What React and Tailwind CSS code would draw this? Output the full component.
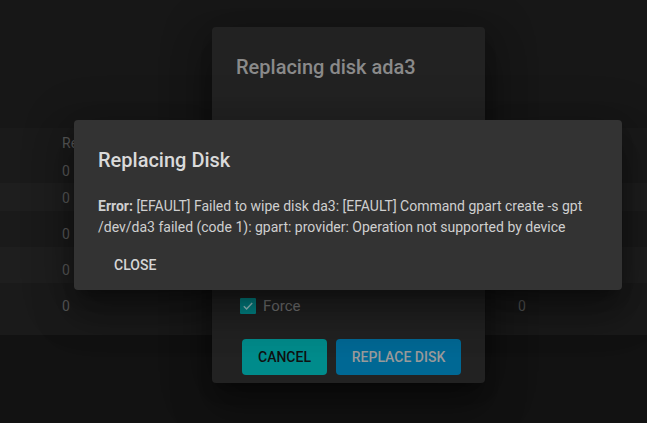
import React from "react";

const shadow =
  "shadow-[0_11px_15px_-7px_rgba(0,0,0,0.35),0_24px_38px_3px_rgba(0,0,0,0.25),0_9px_46px_8px_rgba(0,0,0,0.22)]";

function Row({ h, pt, light, right, children }) {
  return (
    <div
      className={`flex items-start ${h} ${pt} ${light ? "bg-[#1e1e1e]" : "bg-[#1a1a1a]"}`}
    >
      <div className="w-[62px]" />
      <div className="w-[456px] text-[14px] leading-[20px] text-[#5a5a5a]">{children}</div>
      <div className="text-[14px] leading-[20px] text-[#5a5a5a]">{right}</div>
    </div>
  );
}

export default function App() {
  return (
    <div
      className="relative w-[647px] h-[423px] overflow-hidden bg-[#171717]"
      style={{ fontFamily: "Roboto, 'Liberation Sans', sans-serif" }}
    >
      <div className="flex flex-col h-full">
        <div className="h-[128px]" />
        <div className="flex flex-col">
          <Row h="h-[28px]" pt="pt-[5px]">Re</Row>
          <Row h="h-[27px]" pt="pt-[5px]">0</Row>
          <Row h="h-[28px]" pt="pt-[5px]" light>0</Row>
          <Row h="h-[36px]" pt="pt-[13px]">0</Row>
          <Row h="h-[36px]" pt="pt-[13px]" light>0</Row>
          <Row h="h-[52px]" pt="pt-[13px]" right="0">0</Row>
        </div>
        <div className="flex-1 bg-[#121212]" />
      </div>

      {/* Replace disk dialog */}
      <div
        className={`absolute left-[212px] top-[27px] w-[273px] h-[356px] rounded-[4px] bg-[#222222] ${shadow} flex flex-col`}
      >
        <div className="px-[24px] pt-[24px] text-[20px] leading-[32px] font-medium text-[#8a8a8a]">
          Replacing disk ada3
        </div>
        <div className="flex-1" />
        <div className="flex items-center gap-[7px] pl-[28px] h-[20px]">
          <div className="w-[16px] h-[16px] bg-[#00898b] flex items-center justify-center rounded-[1px]">
            <svg width="12" height="12" viewBox="0 0 12 12">
              <path
                d="M1.8 6.2 L4.6 9 L10.2 3"
                fill="none"
                stroke="#9fd0d0"
                strokeWidth="1.5"
              />
            </svg>
          </div>
          <span className="text-[15px] text-[#777777]">Force</span>
        </div>
        <div className="h-[23px]" />
        <div className="flex gap-[9px] pl-[30px]">
          <button className="w-[85px] h-[36px] rounded-[4px] bg-[#008b8b] text-[14px] font-medium text-[#101010] uppercase">
            Cancel
          </button>
          <button className="w-[125px] h-[36px] rounded-[4px] bg-[#006894] text-[14px] font-medium text-[#9a9a9a] uppercase">
            Replace Disk
          </button>
        </div>
        <div className="h-[8px]" />
      </div>

      {/* Error dialog */}
      <div
        className={`absolute left-[74px] top-[120px] w-[548px] h-[170px] rounded-[4px] bg-[#333333] ${shadow} flex flex-col`}
      >
        <div className="px-[24px] pt-[24px] text-[20px] leading-[32px] font-medium text-[#dadada]">
          Replacing Disk
        </div>
        <div className="px-[24px] pt-[20px] text-[14px] leading-[21px] text-[#cfcfcf]">
          <b className="font-bold">Error:</b> [EFAULT] Failed to wipe disk da3: [EFAULT] Command gpart create -s gpt /dev/da3 failed (code 1): gpart: provider: Operation not supported by device
        </div>
        <div className="pl-[24px] pt-[9px]">
          <button className="h-[36px] px-[16px] text-[14px] font-medium text-[#d6d6d6] uppercase">
            Close
          </button>
        </div>
      </div>
    </div>
  );
}
